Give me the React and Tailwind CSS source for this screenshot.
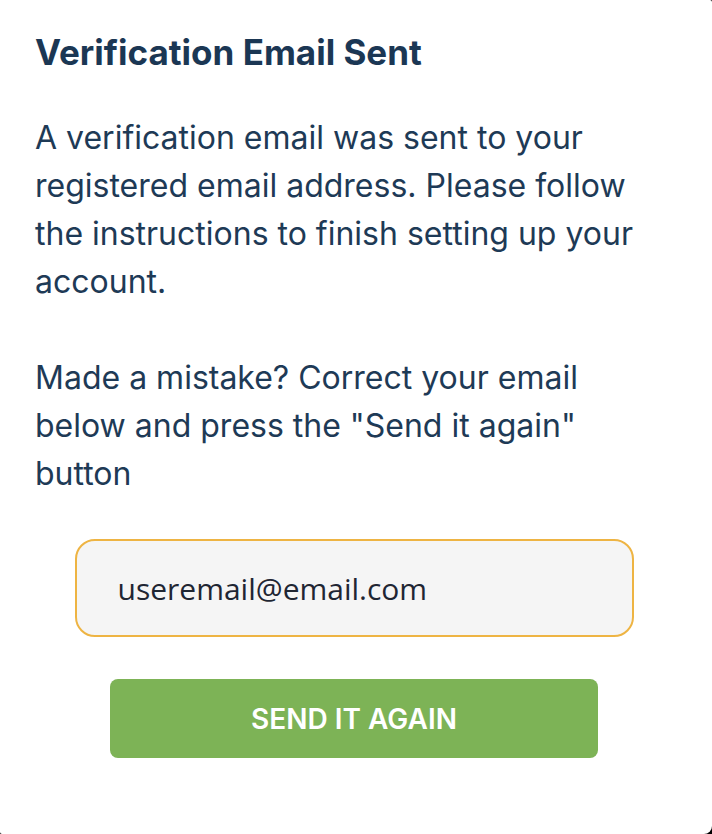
export default function App() {
  return (
    <div className="min-h-[834px] w-[712px] bg-black" style={{ fontFamily: 'Inter, "Liberation Sans", sans-serif' }}>
      <div className="flex min-h-[834px] w-[712px] flex-col rounded-br-[8px] rounded-tr-[2px] rounded-bl-[2px] bg-white pl-[35px] pr-[60px] pt-[33px]">
        <h1 className="text-[35px] font-bold leading-[38px] text-[#1b3754]">Verification Email Sent</h1>

        <p className="mt-[43px] text-[32px] leading-[48px] text-[#1e3a56]">
          A verification email was sent to your registered email address. Please follow the instructions to finish
          setting up your account.
        </p>

        <p className="mt-[48px] text-[32px] leading-[48px] text-[#1e3a56]">
          Made a mistake? Correct your email below and press the "Send it again" button
        </p>

        <div className="mr-[-21px] mt-[41px] flex flex-col items-center">
          <input
            type="email"
            defaultValue="useremail@email.com"
            className="h-[98px] w-[559px] rounded-[20px] border-2 border-[#eeb443] bg-[#f5f5f5] px-[41px] text-[30px] text-[#1f2633] outline-none"
            style={{ fontFamily: '"Open Sans", Lato, sans-serif' }}
          />
          <button className="mt-[42px] h-[79px] w-[488px] rounded-[8px] bg-[#7db356] text-[28px] font-semibold uppercase text-white">
            Send it again
          </button>
        </div>
      </div>
    </div>
  );
}
